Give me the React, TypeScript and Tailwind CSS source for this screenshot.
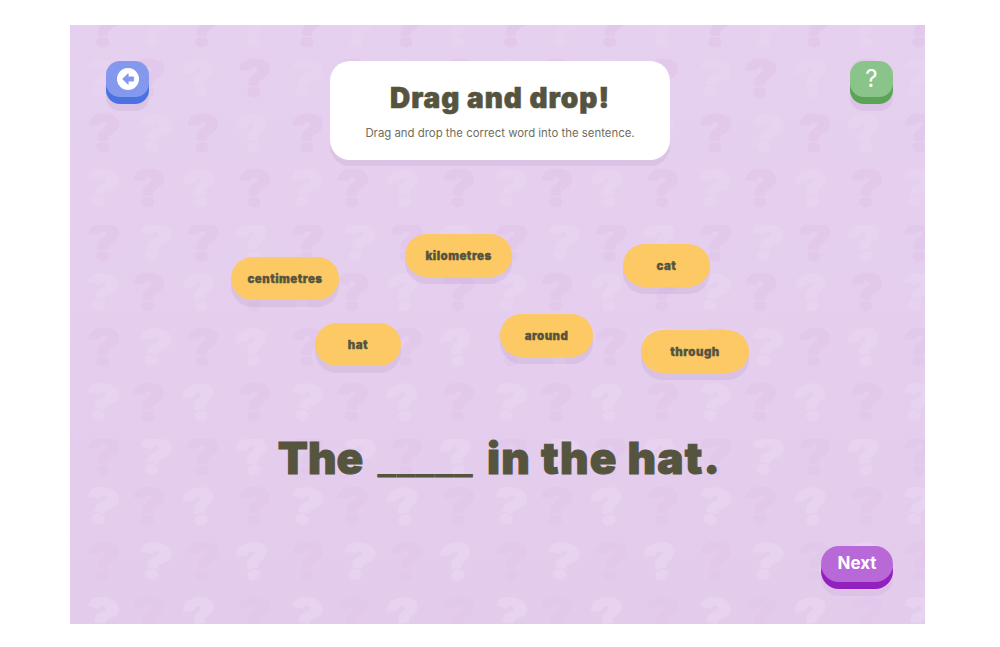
import React from "react";

const head = "font-['Inter','Liberation_Sans',sans-serif] font-black";
const body = "font-['Inter','Liberation_Sans',sans-serif]";

type Mark = { x: number; y: number; dark: boolean; r: number };
const marks: Mark[] = [];
[0, 105].forEach((y) => {
  marks.push({ x: 34, y, dark: true, r: 0 }, { x: 85, y, dark: false, r: 10 }, { x: 133, y, dark: true, r: 0 }, { x: 183, y, dark: false, r: -10 });
});
[50, 160].forEach((y) => {
  marks.push({ x: 32, y, dark: false, r: 12 }, { x: 79, y, dark: true, r: 0 }, { x: 130, y, dark: false, r: -10 }, { x: 185, y, dark: true, r: 0 });
});

function Pattern() {
  return (
    <svg aria-hidden="true" className="absolute inset-0 h-full w-full">
      <defs>
        <pattern id="qm" width="204" height="214" patternUnits="userSpaceOnUse" patternTransform="translate(0 -14)">
          {marks.map((m, i) => {
            const fill = m.dark ? "#e2c9ec" : "#e7d2f0";
            return (
              <text
                key={i}
                x={0}
                y={35}
                textAnchor="middle"
                fontSize="49"
                fontWeight="900"
                fontFamily="Inter, sans-serif"
                fill={fill}
                stroke={fill}
                strokeWidth="1"
                transform={`translate(${m.x} ${m.y}) rotate(${m.r} 0 18) scale(1.16 1)`}
              >
                ?
              </text>
            );
          })}
        </pattern>
      </defs>
      <rect width="100%" height="100%" fill="url(#qm)" />
    </svg>
  );
}

function Chip({ label, cls }: { label: string; cls: string }) {
  return (
    <div
      className={`absolute flex h-[43px] items-center justify-center rounded-full bg-[#fcc964] pt-[2px] text-[11.5px] tracking-[0.45px] text-[#55543f] shadow-[0_7px_0_rgba(90,40,120,0.07)] [-webkit-text-stroke:0.3px_#55543f] ${head} ${cls}`}
    >
      {label}
    </div>
  );
}

export default function App() {
  return (
    <div className="min-h-[647px] bg-white pl-[70px] pt-[25px]">
      <div className="relative h-[599px] w-[855px] overflow-hidden bg-gradient-to-b from-[#e6d0ef] to-[#e3cbec]">
        <Pattern />
        <div className="relative flex h-full flex-col pl-[36px] pr-[32px] pt-[36px]">
          <header className="flex items-start justify-between">
            <button className="flex h-[36px] w-[43px] items-center justify-center rounded-[14px] bg-[#8499ee] shadow-[0_7px_0_#4773e3,0_14px_0_rgba(90,40,120,0.07)]">
              <svg width="22" height="22" viewBox="0 0 22 22">
                <circle cx="11" cy="11" r="11" fill="#fff" />
                <path d="M11.2 5.6 5.6 11l5.6 5.4v-3.3h5.4V8.9h-5.4z" fill="#8499ee" stroke="#8499ee" strokeWidth="0.8" strokeLinejoin="round" />
              </svg>
            </button>
            <div className="ml-px flex h-[99px] w-[340px] flex-col items-center rounded-[20px] bg-white pt-[20px] shadow-[0_6px_0_rgba(90,40,120,0.07)]">
              <h1 className={`text-[28px] leading-[34px] tracking-[1px] text-[#55543f] [-webkit-text-stroke:0.6px_#55543f] ${head}`}>Drag and drop!</h1>
              <p className={`mt-[10px] text-[11.4px] leading-[16px] text-[#6f6e60] ${body}`}>Drag and drop the correct word into the sentence.</p>
            </div>
            <button className={`flex h-[36px] w-[43px] items-center justify-center rounded-[14px] bg-[#8bc48a] text-[24px] font-normal leading-none text-white shadow-[0_7px_0_#5aa357,0_14px_0_rgba(90,40,120,0.07)] ${body}`}>
              ?
            </button>
          </header>
          <div className="relative -ml-[36px] -mr-[32px] mt-[-25px] h-[217px] flex-none">
            <Chip label="centimetres" cls="left-[161px] top-[122px] w-[108px]" />
            <Chip label="kilometres" cls="left-[335px] top-[99px] w-[107px]" />
            <Chip label="cat" cls="left-[553px] top-[109px] w-[87px]" />
            <Chip label="hat" cls="left-[245px] top-[188px] w-[86px]" />
            <Chip label="around" cls="left-[430px] top-[179px] w-[93px]" />
            <Chip label="through" cls="left-[571px] top-[195px] w-[108px]" />
          </div>
          <p className={`mt-[80px] flex h-[52px] items-baseline justify-center gap-[14px] text-[44px] leading-[52px] text-[#55543f] [-webkit-text-stroke:1px_#55543f] ${head}`}>
            <span>The</span>
            <span className="text-[42px] font-normal [-webkit-text-stroke:0]">_____</span>
            <span className="tracking-[1.2px]">in the hat.</span>
          </p>
          <div className="mt-[62px] flex justify-end">
            <button className={`flex h-[36px] w-[72px] items-center justify-center rounded-[18px] bg-[#b968d8] text-[17px] font-bold text-white shadow-[0_7px_0_#9120be,0_14px_0_rgba(90,40,120,0.05)] ${body}`}>
              Next
            </button>
          </div>
        </div>
      </div>
    </div>
  );
}
